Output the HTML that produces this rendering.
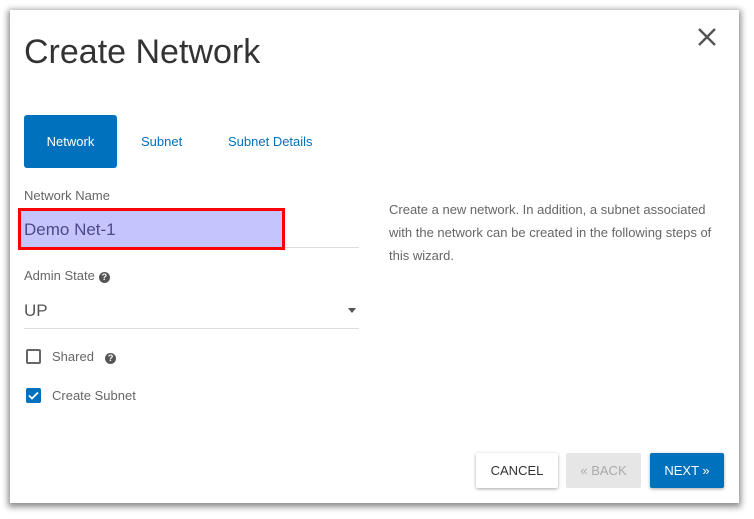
<!DOCTYPE html>
<html><head><style>
*{box-sizing:border-box;margin:0;padding:0}
body{width:754px;height:519px;background:#fff;font-family:"Liberation Sans",sans-serif;position:relative;overflow:hidden}
.dlg{position:absolute;left:10px;top:10px;width:729px;height:493px;background:#fff;box-shadow:0 2px 6px 2px rgba(0,0,0,.45)}
.a{position:absolute}
h1{position:absolute;left:14px;top:23px;font-size:34px;font-weight:normal;color:#333}
.tab{position:absolute;top:105px;height:53px;line-height:53px;font-size:13px;color:#0071bc}
.btn{position:absolute;top:443px;height:35px;line-height:35px;text-align:center;font-size:13px;border-radius:2px}
.q{display:inline-block;width:11px;height:11px;border-radius:50%;background:#555;color:#fff;font-size:9px;line-height:11px;text-align:center;font-weight:bold;margin-left:4px}
</style></head><body>
<div class="dlg">
<h1>Create Network</h1>
<svg class="a" style="left:687px;top:17px" width="20" height="20"><path d="M2 2L18 18M18 2L2 18" stroke="#555" stroke-width="2.4"/></svg>
<div class="tab" style="left:14px;width:93px;background:#0071bc;color:#fff;border-radius:3px;text-align:center">Network</div>
<div class="tab" style="left:131px">Subnet</div>
<div class="tab" style="left:218px">Subnet Details</div>
<div class="a" style="left:14px;top:178px;font-size:13px;color:#666">Network Name</div>
<div class="a" style="left:14px;top:237px;width:335px;height:1px;background:#ddd"></div>
<div class="a" style="left:8px;top:198px;width:267px;height:42px;background:#c5c5fd;border:3px solid #f00"></div>
<div class="a" style="left:14px;top:210px;font-size:17px;color:#4a4a8a">Demo Net-1</div>
<div class="a" style="left:14px;top:258px;font-size:13px;color:#666">Admin State<span class="q">?</span></div>
<div class="a" style="left:14px;top:291px;font-size:17px;color:#555">UP</div>
<div class="a" style="left:338px;top:298px;border-left:4px solid transparent;border-right:4px solid transparent;border-top:5px solid #555"></div>
<div class="a" style="left:14px;top:318px;width:335px;height:1px;background:#ddd"></div>
<div class="a" style="left:16px;top:339px;width:15px;height:15px;border:2px solid #666;border-radius:2px"></div>
<div class="a" style="left:42px;top:339px;font-size:13px;color:#666">Shared &nbsp;<span class="q">?</span></div>
<div class="a" style="left:16px;top:378px;width:15px;height:15px;background:#0071bc;border-radius:2px"><svg width="15" height="15"><path d="M3 7.5L6 10.5L12 4.5" stroke="#fff" stroke-width="1.8" fill="none"/></svg></div>
<div class="a" style="left:42px;top:378px;font-size:13px;color:#666">Create Subnet</div>
<div class="a" style="left:379px;top:188px;width:340px;font-size:13px;line-height:23px;color:#666">Create a new network. In addition, a subnet associated with the network can be created in the following steps of this wizard.</div>
<div class="btn" style="left:466px;width:82px;background:#fff;color:#333;box-shadow:0 1px 3px rgba(0,0,0,.35)">CANCEL</div>
<div class="btn" style="left:556px;width:75px;background:#e6e6e6;color:#aaa">« BACK</div>
<div class="btn" style="left:640px;width:74px;background:#0071bc;color:#fff;box-shadow:0 1px 3px rgba(0,0,0,.35)">NEXT »</div>
</div>
</body></html>
